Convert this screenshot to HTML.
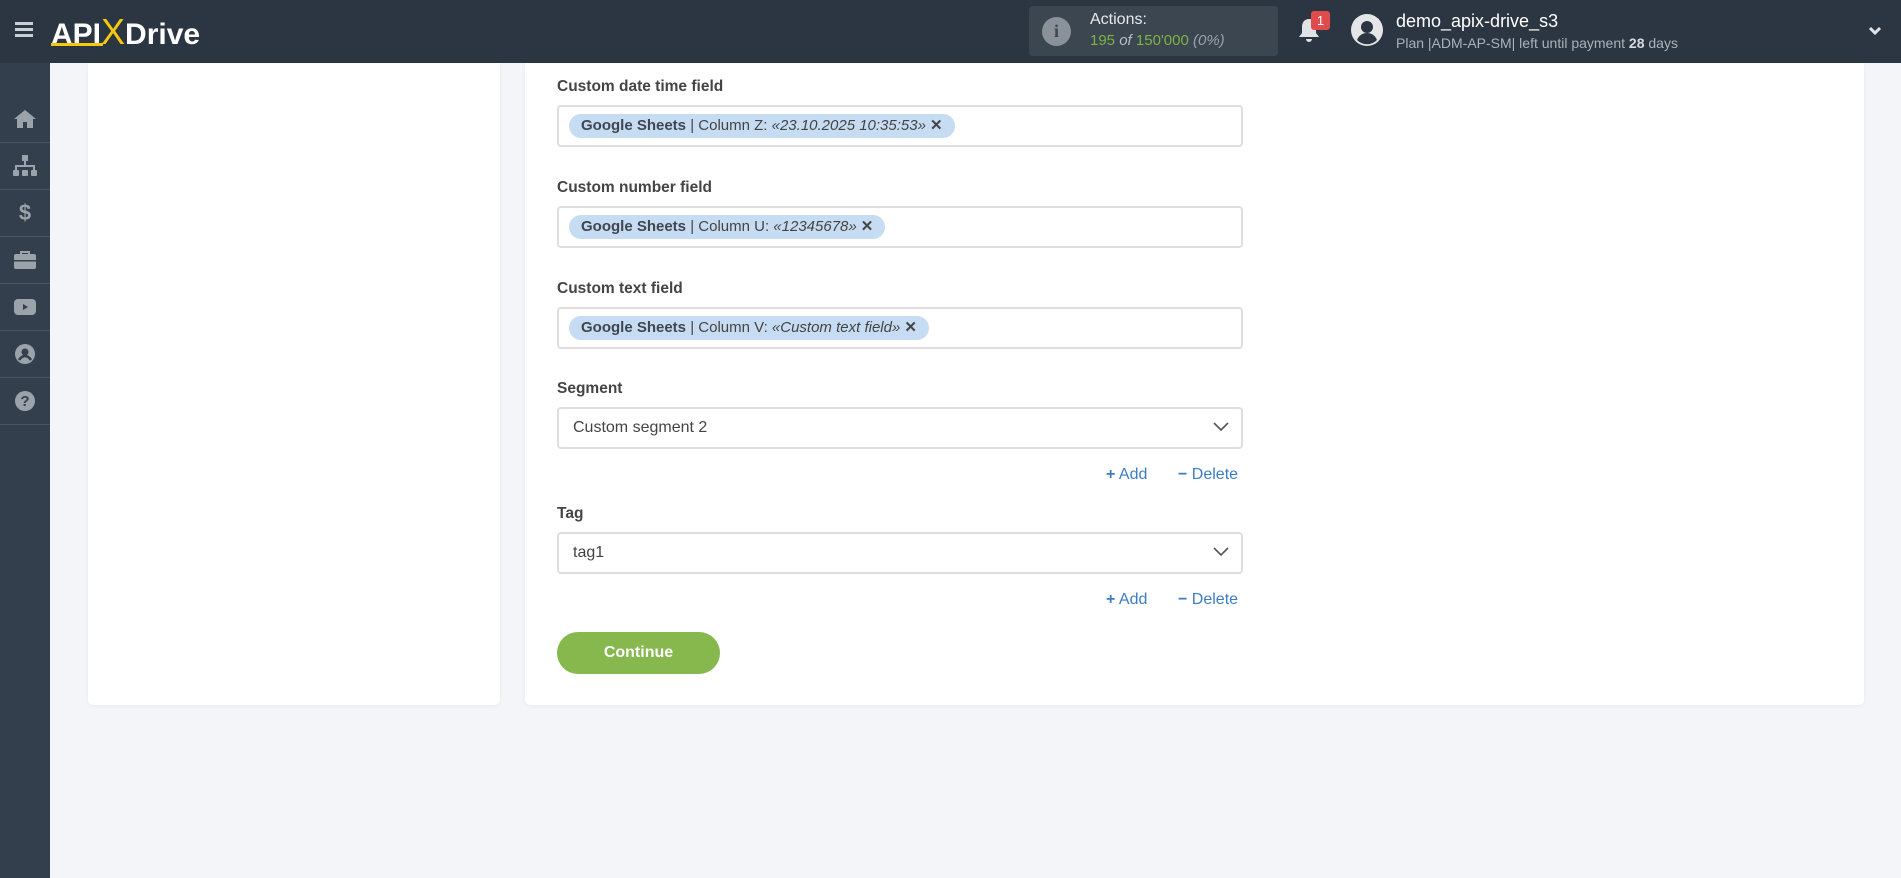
<!DOCTYPE html>
<html><head><meta charset="utf-8"><style>
*{box-sizing:border-box;margin:0;padding:0}
body{width:1901px;height:878px;background:#f3f5f9;font-family:"Liberation Sans",sans-serif;position:relative;overflow:hidden;color:#444}
.hdr{position:absolute;left:0;top:0;width:1901px;height:63px;background:#2c3643}
.sb{position:absolute;left:0;top:63px;width:50px;height:815px;background:#343f4d}
.sb .it{position:absolute;left:0;width:50px;height:47px;border-bottom:1px solid #4a5563;display:flex;align-items:center;justify-content:center}
.card{position:absolute;background:#fff;border-radius:0 0 5px 5px;box-shadow:0 1px 4px rgba(0,0,0,.05)}
.lbl{position:absolute;left:557px;font-size:15.5px;font-weight:bold;color:#444}
.inp{position:absolute;left:557px;width:686px;height:42px;border:2px solid #dedede;border-radius:4px;background:#fff}
.chip{position:absolute;left:10px;top:7px;height:24px;line-height:24px;padding:0 12px 0 12px;background:#c6dcf3;border-radius:12px;font-size:15px;color:#444;white-space:nowrap}
.chip b{color:#3f4650}
.chip .x{font-weight:bold;margin-left:4px}
.sel{font-size:16px;color:#444;line-height:38px;padding-left:14px}
.chev{position:absolute;right:12px;top:13px}
.ad{position:absolute;font-size:16px;color:#3b7dc4}
.btn{position:absolute;left:557px;top:632px;width:163px;height:42px;border-radius:21px;background:#86b84d;color:#fff;font-size:16px;font-weight:bold;text-align:center;line-height:42px}
</style></head><body>
<div class="hdr">
 <div style="position:absolute;left:15px;top:22px;width:18px;height:3px;background:#c9cfd6;box-shadow:0 6px 0 #c9cfd6,0 12px 0 #c9cfd6"></div>
 <div style="position:absolute;left:51px;top:11px;font-size:30px;font-weight:bold;color:#fff;white-space:nowrap">API<span style="color:#f6c90e;font-weight:normal;font-size:36px;position:relative;top:0px">X</span>Drive</div>
 <div style="position:absolute;left:51px;top:43px;width:52px;height:3px;background:#f6c90e"></div>
 <div style="position:absolute;left:1029px;top:6px;width:249px;height:50px;background:#3b4651;border-radius:4px">
  <div style="position:absolute;left:13px;top:11px;width:29px;height:29px;border-radius:50%;background:#8a9199;color:#3b4651;font-weight:bold;text-align:center;line-height:29px;font-family:'Liberation Serif',serif;font-size:18px">i</div>
  <div style="position:absolute;left:61px;top:5px;font-size:16px;color:#e6e9ec">Actions:</div>
  <div style="position:absolute;left:61px;top:26px;font-size:15px;color:#7cb342">195 <i style="color:#b8bec5">of</i> 150'000 <i style="color:#9aa1a8">(0%)</i></div>
 </div>
 <svg style="position:absolute;left:1297px;top:17px" width="24" height="28" viewBox="0 0 24 28"><path d="M12 2c-5 0-7 4-7 8v6l-3 4h20l-3-4v-6c0-4-2-8-7-8z M9 22a3 3 0 0 0 6 0z" fill="#dfe3e7"/></svg>
 <div style="position:absolute;left:1311px;top:11px;width:19px;height:19px;background:#e04b4b;border-radius:3px;color:#fff;font-size:13px;text-align:center;line-height:19px">1</div>
 <svg style="position:absolute;left:1351px;top:14px" width="32" height="32" viewBox="0 0 32 32"><circle cx="16" cy="16" r="16" fill="#e4e6e8"/><circle cx="16" cy="13" r="6" fill="#2c3643"/><path d="M6 26c2-5 6-7 10-7s8 2 10 7a14 14 0 0 1-20 0z" fill="#2c3643"/></svg>
 <div style="position:absolute;left:1396px;top:11px;font-size:18px;color:#fff">demo_apix-drive_s3</div>
 <div style="position:absolute;left:1396px;top:35px;font-size:14px;color:#aab1b8">Plan |ADM-AP-SM| left until payment <b style="color:#d5d9dd">28</b> days</div>
 <svg style="position:absolute;left:1868px;top:26px" width="14" height="10" viewBox="0 0 14 10"><path d="M2 2l5 5 5-5" stroke="#dfe3e7" stroke-width="3" fill="none"/></svg>
</div>
<div class="sb">
 <div class="it" style="top:33px"><svg width="24" height="20" viewBox="0 0 24 20"><path d="M12 1L1 10h3v9h6v-6h4v6h6v-9h3z" fill="#9ba2aa"/></svg></div>
 <div class="it" style="top:80px"><svg width="26" height="22" viewBox="0 0 26 22"><rect x="10" y="0" width="6" height="6" fill="#9ba2aa"/><path d="M13 6v4M4 16v-5h18v5" stroke="#9ba2aa" stroke-width="2" fill="none"/><rect x="1" y="15" width="6" height="6" rx="1" fill="#9ba2aa"/><rect x="10" y="15" width="6" height="6" rx="1" fill="#9ba2aa"/><rect x="19" y="15" width="6" height="6" rx="1" fill="#9ba2aa"/></svg></div>
 <div class="it" style="top:127px;color:#9ba2aa;font-weight:bold;font-size:22px">$</div>
 <div class="it" style="top:174px"><svg width="24" height="20" viewBox="0 0 24 20"><path d="M8 4V2h8v2" stroke="#9ba2aa" stroke-width="2" fill="none"/><rect x="1" y="4" width="22" height="15" rx="2" fill="#9ba2aa"/><rect x="1" y="10" width="22" height="1.5" fill="#343f4d"/></svg></div>
 <div class="it" style="top:221px"><svg width="24" height="18" viewBox="0 0 24 18"><rect x="1" y="1" width="22" height="16" rx="4" fill="#9ba2aa"/><path d="M10 6l5 3-5 3z" fill="#343f4d"/></svg></div>
 <div class="it" style="top:268px"><svg width="22" height="22" viewBox="0 0 22 22"><circle cx="11" cy="11" r="10" fill="#9ba2aa"/><circle cx="11" cy="9" r="3.5" fill="#343f4d"/><path d="M5 17c2-3 4-4 6-4s4 1 6 4" stroke="#343f4d" stroke-width="2.5" fill="none"/></svg></div>
 <div class="it" style="top:315px"><svg width="22" height="22" viewBox="0 0 22 22"><circle cx="11" cy="11" r="10" fill="#9ba2aa"/><text x="11" y="16" text-anchor="middle" font-size="15" font-weight="bold" fill="#343f4d" font-family="Liberation Sans">?</text></svg></div>
</div>
<div class="card" style="left:88px;top:63px;width:412px;height:642px"></div>
<div class="card" style="left:525px;top:63px;width:1339px;height:642px"></div>

<div class="lbl" style="top:78px">Custom date time field</div>
<div class="inp" style="top:105px"><div class="chip"><b>Google Sheets</b> | Column Z: <i>«23.10.2025 10:35:53»</i><span class="x">✕</span></div></div>
<div class="lbl" style="top:179px">Custom number field</div>
<div class="inp" style="top:206px"><div class="chip"><b>Google Sheets</b> | Column U: <i>«12345678»</i><span class="x">✕</span></div></div>
<div class="lbl" style="top:280px">Custom text field</div>
<div class="inp" style="top:307px"><div class="chip"><b>Google Sheets</b> | Column V: <i>«Custom text field»</i><span class="x">✕</span></div></div>
<div class="lbl" style="top:380px">Segment</div>
<div class="inp" style="top:407px"><div class="sel">Custom segment 2</div><svg class="chev" width="16" height="10" viewBox="0 0 16 10"><path d="M1 1l7 7 7-7" stroke="#555" stroke-width="1.6" fill="none"/></svg></div>
<div class="ad" style="left:1106px;top:466px"><b>+</b> Add</div>
<div class="ad" style="left:1178px;top:466px"><b>−</b> Delete</div>
<div class="lbl" style="top:505px">Tag</div>
<div class="inp" style="top:532px"><div class="sel">tag1</div><svg class="chev" width="16" height="10" viewBox="0 0 16 10"><path d="M1 1l7 7 7-7" stroke="#555" stroke-width="1.6" fill="none"/></svg></div>
<div class="ad" style="left:1106px;top:591px"><b>+</b> Add</div>
<div class="ad" style="left:1178px;top:591px"><b>−</b> Delete</div>
<div class="btn">Continue</div>
</body></html>
